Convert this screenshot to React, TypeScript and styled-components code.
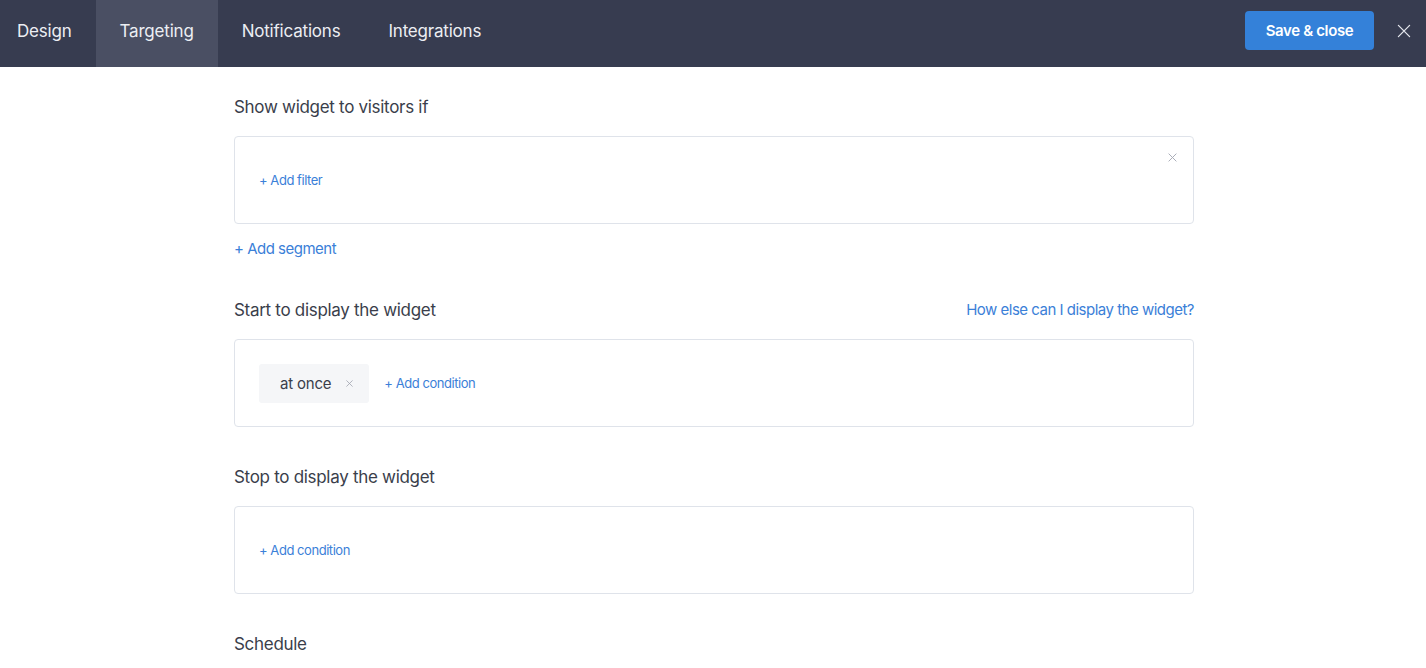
import React from "react";
import styled, { createGlobalStyle } from "styled-components";

const Global = createGlobalStyle`
  html, body { margin: 0; padding: 0; background: #ffffff; }
  body { font-family: Inter, "Noto Sans", "Liberation Sans", sans-serif; -webkit-font-smoothing: antialiased; }
  * { box-sizing: border-box; }
`;

const Header = styled.header`
  height: 67px;
  background: #373c50;
  display: flex;
  align-items: stretch;
  padding-right: 15px;
`;

const Tabs = styled.nav`
  display: flex;
  align-items: stretch;
  flex: 1;
`;

const Tab = styled.div<{ $active?: boolean }>`
  display: flex;
  align-items: center;
  padding: 0 24px 6px;
  font-size: 17px;
  font-weight: 400;
  letter-spacing: -0.2px;
  color: #eceef3;
  background: ${(p) => (p.$active ? "#4a4f63" : "transparent")};
  &:first-child { padding-left: 17px; }
`;

const Actions = styled.div`
  display: flex;
  align-items: center;
  gap: 23px;
  padding-bottom: 6px;
`;

const SaveButton = styled.button`
  height: 39px;
  width: 129px;
  border: none;
  border-radius: 4px;
  background: #3481d9;
  color: #ffffff;
  font-family: inherit;
  font-size: 15px;
  font-weight: 600;
  letter-spacing: -0.35px;
`;

const CloseButton = styled.button`
  width: 14px;
  height: 14px;
  padding: 0;
  border: none;
  background: transparent;
  display: flex;
  align-items: center;
  justify-content: center;
`;

const Main = styled.main`
  width: 960px;
  margin-left: calc(50% - 479px);
  padding-top: 28px;
  display: flex;
  flex-direction: column;
  gap: 38px;
`;

const Section = styled.section`
  display: flex;
  flex-direction: column;
`;

const SectionHead = styled.div`
  display: flex;
  justify-content: space-between;
  align-items: center;
  margin-bottom: 17px;
`;

const Title = styled.h2`
  margin: 0;
  font-size: 17px;
  line-height: 24px;
  font-weight: 400;
  letter-spacing: -0.3px;
  color: #3a3e4b;
`;

const HeadLink = styled.a`
  font-size: 15px;
  line-height: 22px;
  color: #3b80d8;
  letter-spacing: -0.5px;
  text-decoration: none;
`;

const Box = styled.div`
  position: relative;
  min-height: 88px;
  border: 1px solid #dfe3ea;
  border-radius: 4px;
  padding: 0 24px;
  display: flex;
  align-items: center;
  gap: 15px;
`;

const SmallLink = styled.a`
  font-size: 13px;
  line-height: 18px;
  color: #3b80d8;
  letter-spacing: -0.45px;
  text-decoration: none;
`;

const BigLink = styled.a`
  margin-top: 14px;
  font-size: 15px;
  line-height: 22px;
  color: #3b80d8;
  letter-spacing: -0.5px;
  text-decoration: none;
`;

const BoxClose = styled.span`
  position: absolute;
  top: 16px;
  right: 16px;
  display: flex;
`;

const Chip = styled.div`
  height: 39px;
  display: flex;
  align-items: center;
  gap: 15px;
  padding: 0 16px 0 21px;
  background: #f5f6f8;
  border-radius: 3px;
  font-size: 15px;
  color: #3a3e4b;
  letter-spacing: -0.2px;
`;

const Cross = ({ size, color, stroke }: { size: number; color: string; stroke: number }) => (
  <svg width={size} height={size} viewBox="0 0 10 10" fill="none">
    <path d="M1 1L9 9M9 1L1 9" stroke={color} strokeWidth={stroke} strokeLinecap="round" />
  </svg>
);

export default function App() {
  return (
    <>
      <Global />
      <Header>
        <Tabs>
          <Tab>Design</Tab>
          <Tab $active>Targeting</Tab>
          <Tab>Notifications</Tab>
          <Tab>Integrations</Tab>
        </Tabs>
        <Actions>
          <SaveButton>Save &amp; close</SaveButton>
          <CloseButton aria-label="Close">
            <Cross size={14} color="#e6e8ee" stroke={0.9} />
          </CloseButton>
        </Actions>
      </Header>
      <Main>
        <Section>
          <SectionHead>
            <Title>Show widget to visitors if</Title>
          </SectionHead>
          <Box>
            <SmallLink>+ Add filter</SmallLink>
            <BoxClose>
              <Cross size={9} color="#a9adb8" stroke={1.1} />
            </BoxClose>
          </Box>
          <BigLink>+ Add segment</BigLink>
        </Section>
        <Section>
          <SectionHead>
            <Title>Start to display the widget</Title>
            <HeadLink>How else can I display the widget?</HeadLink>
          </SectionHead>
          <Box>
            <Chip>
              at once
              <Cross size={7} color="#9da1ac" stroke={1.1} />
            </Chip>
            <SmallLink>+ Add condition</SmallLink>
          </Box>
        </Section>
        <Section>
          <SectionHead>
            <Title>Stop to display the widget</Title>
          </SectionHead>
          <Box>
            <SmallLink>+ Add condition</SmallLink>
          </Box>
        </Section>
        <Section>
          <SectionHead>
            <Title>Schedule</Title>
          </SectionHead>
        </Section>
      </Main>
    </>
  );
}
